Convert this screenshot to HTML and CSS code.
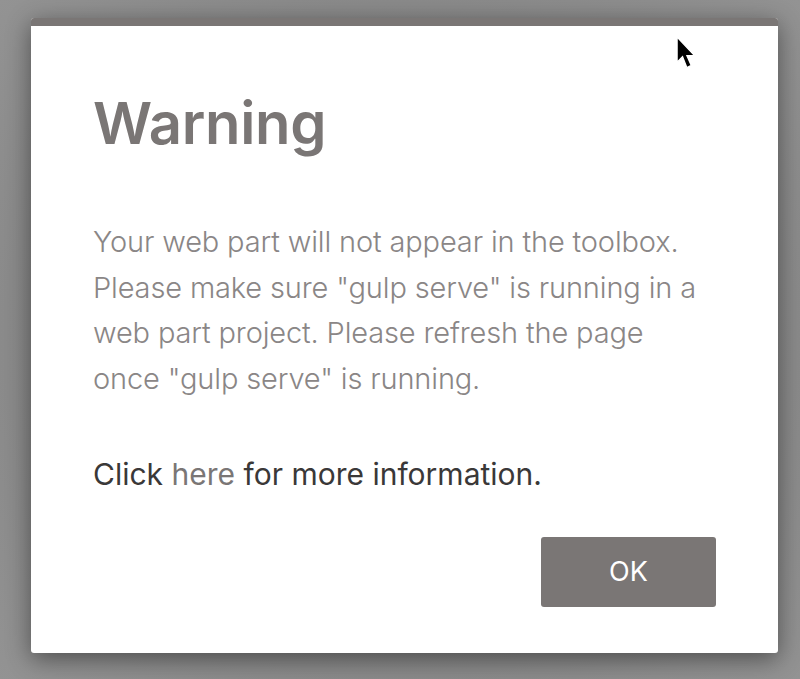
FILE: index.html
```html
<!DOCTYPE html>
<html lang="en">
<head>
<meta charset="UTF-8">
<meta name="viewport" content="width=device-width, initial-scale=1.0">
<title>Warning</title>
<link rel="stylesheet" href="styles.css">
</head>
<body>
  <div class="overlay">
    <div class="dialog">
      <div class="dialog-bar"></div>
      <div class="dialog-body">
        <h1 class="dialog-title">Warning</h1>
        <p class="dialog-text">Your web part will not appear in the toolbox. Please make sure "gulp serve" is running in a web part project. Please refresh the page once "gulp serve" is running.</p>
        <p class="dialog-link">Click <a href="#" class="here">here</a> for more information.</p>
        <div class="dialog-actions">
          <button type="button" class="ok-btn">OK</button>
        </div>
      </div>
      <!-- mouse pointer from the screenshot -->
      <svg class="cursor" width="24" height="36" viewBox="0 0 22 33">
        <path d="M1 1 L1 24 L6 19 L10 29 L14 27 L10 18 L17 18 Z" fill="#000" stroke="#fff" stroke-width="1.2"/>
      </svg>
    </div>
  </div>
</body>
</html>
```

FILE: styles.css
```css
body {
  margin: 0;
  padding: 0;
  font-family: Inter, "Noto Sans", sans-serif;
  background: radial-gradient(ellipse at center, #7c7c7c 0%, #8a8a8a 70%, #939393 100%);
  height: 679px;
  overflow: hidden;
}
.overlay {
  display: flex;
  padding: 18px 22px 0 31px;
}
.dialog {
  position: relative;
  width: 747px;
  height: 635px;
  background-color: white;
  border-radius: 3px;
  box-shadow: 0 6px 24px rgba(0, 0, 0, 0.45);
  display: flex;
  flex-direction: column;
  overflow: hidden;
}
.dialog-bar {
  height: 8px;
  background-color: #7a7675;
}
.dialog-body {
  padding: 0 62px 0 62px;
  display: flex;
  flex-direction: column;
}
.dialog-title {
  margin: 62px 0 0 0;
  font-size: 58px;
  font-weight: 600;
  line-height: 70px;
  color: #7a7675;
  letter-spacing: -0.3px;
}
.dialog-text {
  margin: 61px 0 0 0;
  font-size: 29px;
  font-weight: 300;
  line-height: 45.6px;
  letter-spacing: -0.15px;
  color: #8a8686;
}
.dialog-link {
  margin: 51px 0 0 0;
  font-size: 30px;
  font-weight: 400;
  line-height: 45.6px;
  color: #3a3838;
}
.here {
  color: #7a7675;
  text-decoration: none;
}
.dialog-actions {
  display: flex;
  justify-content: flex-end;
  margin-top: 39px;
}
.ok-btn {
  width: 175px;
  height: 70px;
  background-color: #7a7675;
  color: white;
  border: none;
  border-radius: 3px;
  font-family: Inter, "Noto Sans", sans-serif;
  font-size: 27px;
  cursor: pointer;
}
.cursor {
  position: absolute;
  left: 645px;
  top: 18px;
}
```
